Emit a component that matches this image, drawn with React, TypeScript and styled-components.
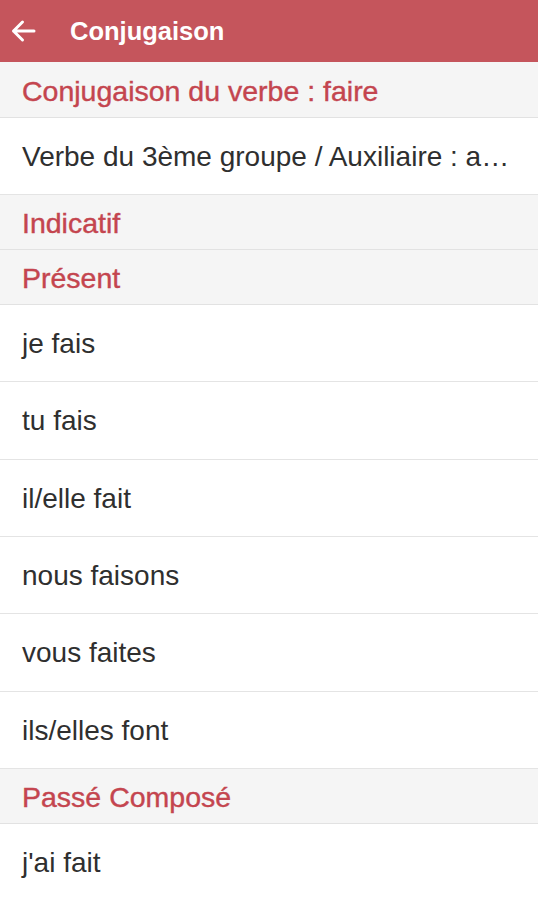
import React from "react";
import styled, { createGlobalStyle } from "styled-components";

const Global = createGlobalStyle`
  html, body { margin: 0; padding: 0; background: #ffffff; }
  body { font-family: "Liberation Sans", Arial, sans-serif; overflow: hidden; }
  * { box-sizing: border-box; }
`;

const Screen = styled.div`
  width: 538px;
  height: 900px;
  overflow: hidden;
  display: flex;
  flex-direction: column;
  background: #fff;
`;

const TopBar = styled.header`
  height: 62px;
  flex: none;
  background: #c5555c;
  display: flex;
  align-items: center;
  padding-left: 9px;
  gap: 34px;
  color: #fff;
`;

const BackButton = styled.button`
  border: 0;
  background: transparent;
  padding: 0;
  width: 27px;
  height: 27px;
  display: flex;
  align-items: center;
  justify-content: center;
  color: #fff;
`;

const Title = styled.h1`
  margin: 0;
  font-size: 25.5px;
  font-weight: 700;
`;

const SectionHeader = styled.div<{ $tall?: boolean }>`
  flex: none;
  height: ${(p) => (p.$tall ? 56 : 55)}px;
  background: #f5f5f5;
  border-bottom: 1.5px solid #e2e2e2;
  display: flex;
  align-items: center;
  padding: 3px 0 0 22px;
  color: #c4454f;
  font-size: 28.5px;
  -webkit-text-stroke: 0.4px #c4454f;
`;

const Row = styled.div<{ $h?: number }>`
  flex: none;
  height: ${(p) => p.$h ?? 77.33}px;
  border-bottom: 1.5px solid #e4e4e4;
  display: flex;
  align-items: center;
  padding: 2px 22px 0 22px;
  color: #2f2f2f;
  font-size: 28px;
  white-space: nowrap;
`;

const present = [
  "je fais",
  "tu fais",
  "il/elle fait",
  "nous faisons",
  "vous faites",
  "ils/elles font",
];

export default function App() {
  return (
    <Screen>
      <Global />
      <TopBar>
        <BackButton aria-label="Retour">
          <svg width="26" height="24" viewBox="0 0 26 24" fill="none">
            <path
              d="M24 12H3.5M12.5 3L3.5 12L12.5 21"
              stroke="#fff"
              strokeWidth="3"
              strokeLinecap="round"
              strokeLinejoin="round"
            />
          </svg>
        </BackButton>
        <Title>Conjugaison</Title>
      </TopBar>
      <SectionHeader $tall>Conjugaison du verbe : faire</SectionHeader>
      <Row $h={77}>Verbe du 3ème groupe / Auxiliaire : a…</Row>
      <SectionHeader>Indicatif</SectionHeader>
      <SectionHeader>Présent</SectionHeader>
      {present.map((t) => (
        <Row key={t}>{t}</Row>
      ))}
      <SectionHeader>Passé Composé</SectionHeader>
      <Row>j'ai fait</Row>
    </Screen>
  );
}
